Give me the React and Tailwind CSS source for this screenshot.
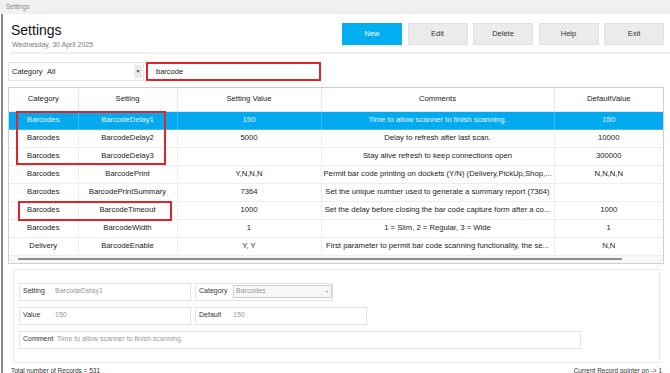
import React from "react";

const rows = [
  ["Barcodes", "BarcodeDelay1", "150", "Time to allow scanner to finish scanning.", "150"],
  ["Barcodes", "BarcodeDelay2", "5000", "Delay to refresh after last scan.", "10000"],
  ["Barcodes", "BarcodeDelay3", "", "Stay alive refresh to keep connections open", "300000"],
  ["Barcodes", "BarcodePrint", "Y,N,N,N", "Permit bar code printing on dockets (Y/N) (Delivery,PickUp,Shop,...", "N,N,N,N"],
  ["Barcodes", "BarcodePrintSummary", "7364", "Set the unique number used to generate a summary report (7364)", ""],
  ["Barcodes", "BarcodeTimeout", "1000", "Set the delay before closing the bar code capture form after a co...", "1000"],
  ["Barcodes", "BarcodeWidth", "1", "1 = Slim, 2 = Regular, 3 = Wide", "1"],
  ["Delivery", "BarcodeEnable", "Y, Y", "First parameter to permit bar code scanning functionality, the se...", "N,N"],
];

function Btn({ children, primary }) {
  return (
    <div
      className={
        "w-[60px] h-[22px] flex items-center justify-center text-[7.5px] border " +
        (primary
          ? "bg-[#03aef0] border-[#03aef0] text-white"
          : "bg-[#ebebeb] border-[#e2e2e2] text-[#333]")
      }
    >
      {children}
    </div>
  );
}

function Field({ label, value, w, lw = "w-[32px]" }) {
  return (
    <div className={"h-[18px] border border-[#e3e3e3] flex items-center pl-[3px] text-[7px] " + w}>
      <span className={"text-[#333] " + lw}>{label}</span>
      <span className="text-[#999]">{value}</span>
    </div>
  );
}

export default function App() {
  return (
    <div
      className="w-[670px] h-[373px] overflow-hidden bg-white flex flex-col"
      style={{ fontFamily: '"Liberation Sans", Arial, sans-serif' }}
    >
      <div className="h-[14px] shrink-0 bg-[#f0f0f0] text-[6.5px] text-[#8a8a8a] pl-[6px] flex items-center">
        Settings
      </div>
      <div className="flex-1 ml-[1px] border-l-[2px] border-[#8a8a8a] flex flex-col">
        {/* header */}
        <div className="flex justify-between pt-[9px] pr-[6px] h-[38px]">
          <div className="pl-[8px] -mt-[1px]">
            <div className="text-[14px] leading-[17px] text-[#111]">Settings</div>
            <div className="text-[7px] leading-[9px] text-[#7a7a7a] pl-[1px] mt-[1px]">Wednesday, 30 April 2025</div>
          </div>
          <div className="flex gap-[5.5px]">
            <Btn primary>New</Btn>
            <Btn>Edit</Btn>
            <Btn>Delete</Btn>
            <Btn>Help</Btn>
            <Btn>Exit</Btn>
          </div>
        </div>
        <div className="ml-[7px] h-[2px] bg-[#f0f0f0]" />

        {/* filter row */}
        <div className="flex items-center mt-[8px] ml-[5px] gap-[2px] h-[19px]">
          <div className="w-[136px] h-[19px] border border-[#e3e3e3] flex items-center text-[7.5px] text-[#222] pl-[3px] pr-[1px]">
            <span className="w-[35px]">Category</span>
            <span className="flex-1">All</span>
            <span className="w-[8px] h-[13px] bg-[#eaeaea] flex items-center justify-center text-[5px] text-[#444]">▼</span>
          </div>
          <div className="w-[175px] h-[19px] border-[2px] border-[#e0242a] flex items-center pl-[8px] text-[7.5px] text-[#222]">
            barcode
          </div>
        </div>

        {/* table */}
        <div className="relative mt-[6px] ml-[5px] w-[656px] border border-[#cfcfcf] bg-[#f7f7f7]">
          <table className="table-fixed border-collapse w-full text-[7.7px] text-[#222] bg-white">
            <colgroup>
              <col className="w-[69px]" />
              <col className="w-[99px]" />
              <col className="w-[144px]" />
              <col className="w-[233px]" />
              <col className="w-[109px]" />
            </colgroup>
            <thead>
              <tr className="h-[23px]">
                {["Category", "Setting", "Setting Value", "Comments", "DefaultValue"].map((h, i) => (
                  <th key={i} className={"font-normal text-center border-b border-[#e6e6e6] " + (i < 4 ? "border-r" : "")}>
                    {h}
                  </th>
                ))}
              </tr>
            </thead>
            <tbody>
              {rows.map((r, ri) => (
                <tr key={ri} className={"h-[18px] " + (ri === 0 ? "bg-[#03aaf0] text-[#e8f6ff]" : "")}>
                  {r.map((c, ci) => (
                    <td
                      key={ci}
                      className={
                        "text-center whitespace-nowrap overflow-hidden p-0 border-b " +
                        (ri === 0 ? "border-[#39bdf3] " : "border-[#eeeeee] ") +
                        (ci < 4 ? "border-r" : "")
                      }
                    >
                      {c}
                    </td>
                  ))}
                </tr>
              ))}
            </tbody>
          </table>
          <div className="h-[7px] flex items-center pl-[9px]">
            <div className="w-[604px] h-[2px] bg-[#8c8c8c]" />
          </div>
          <div className="absolute left-[7px] top-[23px] w-[150px] h-[54px] border-[2px] border-[#e0242a]" />
          <div className="absolute left-[9px] top-[113px] w-[154px] h-[20px] border-[2px] border-[#e0242a]" />
        </div>

        {/* form */}
        <div className="mt-[5px] ml-[10px] w-[647px] h-[94px] border border-[#e8e8e8] pt-[13px] pl-[5px] flex flex-col gap-[6px]">
          <div className="flex gap-[4px]">
            <Field label="Setting" value="BarcodeDelay1" w="w-[172px]" />
            <div className="w-[138px] h-[18px] border border-[#e3e3e3] flex items-center pl-[3px] text-[7px]">
              <span className="text-[#333] w-[34px]">Category</span>
              <div className="w-[99px] h-[13px] border border-[#cfcfcf] bg-[#f7f7f7] flex items-center pl-[2px] pr-[2px] text-[#999]">
                <span className="flex-1">Barcodes</span>
                <span className="text-[4px] text-[#aaa]">▼</span>
              </div>
            </div>
          </div>
          <div className="flex gap-[4px]">
            <Field label="Value" value="150" w="w-[172px]" />
            <Field label="Default" value="150" w="w-[172px]" lw="w-[34px]" />
          </div>
          <Field label="Comment" value="Time to allow scanner to finish scanning." w="w-[562px]" lw="w-[34px]" />
        </div>

        {/* footer */}
        <div className="flex justify-between mt-[4px] pl-[8px] pr-[8px] text-[6.5px] text-[#333] leading-[8px]">
          <span>Total number of Records = 531</span>
          <span>Current Record pointer on -&gt; 1</span>
        </div>
      </div>
    </div>
  );
}
